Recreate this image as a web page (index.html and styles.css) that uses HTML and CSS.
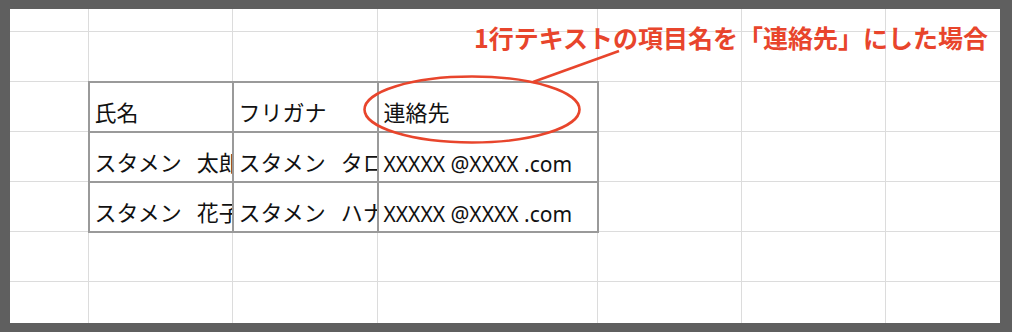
FILE: index.html
```html
<!DOCTYPE html>
<html lang="ja">
	<head>
		<meta charset="utf-8">
		<title>連絡先シート</title>
		<link rel="stylesheet" href="styles.css">
	</head>
	<body>
		<table class="sheet">
			<colgroup>
				<col class="c-head">
				<col class="c-std">
				<col class="c-std2">
				<col class="c-wide">
				<col class="c-std">
				<col class="c-std">
				<col class="c-std">
			</colgroup>
			<tr><td></td><td></td><td></td><td></td><td></td><td></td><td></td></tr>
			<tr><td></td><td></td><td></td><td></td><td></td><td></td><td></td></tr>
			<tr>
				<td></td>
				<td class="box">氏名</td>
				<td class="box">フリガナ</td>
				<td class="box">連絡先</td>
				<td></td><td></td><td></td>
			</tr>
			<tr>
				<td></td>
				<td class="box">スタメン 太郎</td>
				<td class="box">スタメン タロウ</td>
				<td class="box mail">XXXXX @XXXX .com</td>
				<td></td><td></td><td></td>
			</tr>
			<tr>
				<td></td>
				<td class="box">スタメン 花子</td>
				<td class="box">スタメン ハナコ</td>
				<td class="box mail">XXXXX @XXXX .com</td>
				<td></td><td></td><td></td>
			</tr>
			<tr><td></td><td></td><td></td><td></td><td></td><td></td><td></td></tr>
			<tr><td></td><td></td><td></td><td></td><td></td><td></td><td></td></tr>
		</table>

		<!-- callout drawn over the sheet -->
		<p class="note">1行テキストの項目名を「連絡先」にした場合</p>
		<svg class="marks" width="1012" height="336" viewBox="0 0 1012 336">
			<ellipse cx="472" cy="109.5" rx="107.5" ry="33" fill="none" stroke="#e8452c" stroke-width="2.6"/>
			<line x1="533" y1="82" x2="619" y2="51" stroke="#e8452c" stroke-width="2.6"/>
		</svg>

		<div class="frame"></div>
	</body>
</html>
```

FILE: styles.css
```css
body {
	margin: 0;
	background: #fff;
	overflow: hidden;
	font-family: "Noto Sans CJK JP", "Noto Sans", sans-serif;
}

.sheet {
	table-layout: fixed;
	border-collapse: collapse;
	margin-top: -19px;
	margin-left: -2px;
	width: 1031px;
}

.c-head { width: 90px; }
.c-std { width: 144px; }
.c-std2 { width: 145px; }
.c-wide { width: 220px; }

.sheet tr {
	height: 50px;
}

.sheet td {
	padding: 0 0 5px 5px;
	border: 1px solid #dcdcdc;
	vertical-align: bottom;
	white-space: nowrap;
	overflow: hidden;
	font-size: 22px;
	line-height: 30px;
	word-spacing: 10px;
	color: #111;
}

.sheet td.box {
	border: 2px solid #9a9a9a;
}

.sheet td.mail {
	font-family: "Noto Sans", sans-serif;
	font-size: 21px;
	word-spacing: 0;
	padding-bottom: 2px;
}

.note {
	position: absolute;
	left: 474px;
	top: 19px;
	margin: 0;
	font-size: 25px;
	font-weight: 700;
	line-height: 36px;
	color: #e8452c;
	white-space: nowrap;
}

.marks {
	position: absolute;
	left: 0;
	top: 0;
}

.frame {
	position: absolute;
	left: 0;
	top: 0;
	width: 1012px;
	height: 332px;
	box-sizing: border-box;
	border-style: solid;
	border-color: #5f5f5f;
	border-width: 9px 12px 9px 10px;
}
```
